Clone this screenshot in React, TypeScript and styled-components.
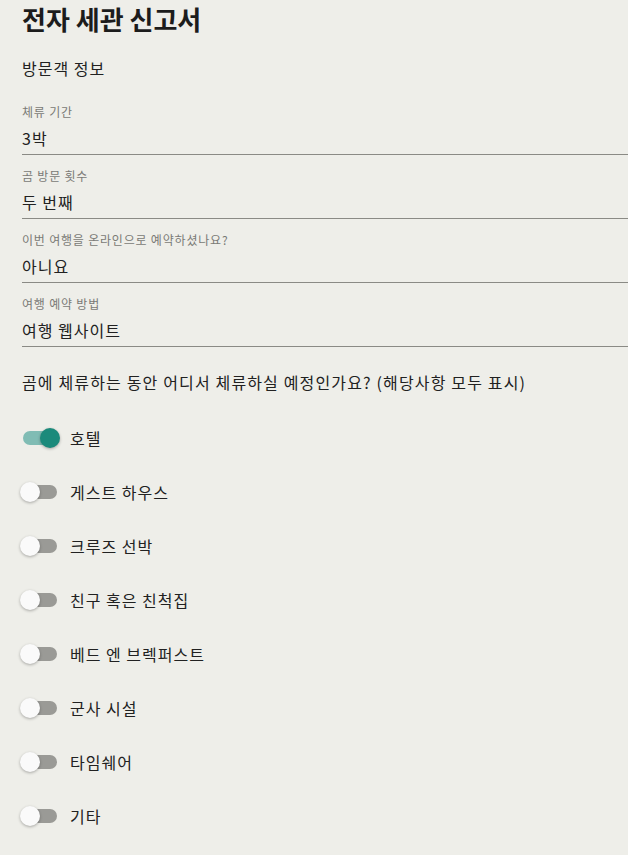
import React from "react";
import styled, { createGlobalStyle } from "styled-components";

const colors = {
  bg: "#eeeee9",
  text: "#212121",
  label: "#7a7a76",
  line: "#8a8a85",
  teal: "#1b8a7b",
  tealTrack: "#80bcb4",
  offTrack: "#9a9a96",
  thumb: "#fafafa",
};

const GlobalStyle = createGlobalStyle`
  html, body {
    margin: 0;
    padding: 0;
    background: ${colors.bg};
  }
  body {
    font-family: "Noto Sans CJK KR", "Noto Sans", sans-serif;
    color: ${colors.text};
  }
`;

const fields = [
  { label: "체류 기간", value: "3박" },
  { label: "곰 방문 횟수", value: "두 번째" },
  { label: "이번 여행을 온라인으로 예약하셨나요?", value: "아니요" },
  { label: "여행 예약 방법", value: "여행 웹사이트" },
];

const stays = [
  { name: "호텔", on: true },
  { name: "게스트 하우스", on: false },
  { name: "크루즈 선박", on: false },
  { name: "친구 혹은 친척집", on: false },
  { name: "베드 엔 브렉퍼스트", on: false },
  { name: "군사 시설", on: false },
  { name: "타임쉐어", on: false },
  { name: "기타", on: false },
];

const App: React.FC = () => {
  return (
    <>
      <GlobalStyle />
      <Page>
        <Title>전자 세관 신고서</Title>
        <SectionTitle>방문객 정보</SectionTitle>
        <FieldList>
          {fields.map((f) => (
            <Field key={f.label}>
              <FieldLabel>{f.label}</FieldLabel>
              <FieldValue>{f.value}</FieldValue>
            </Field>
          ))}
        </FieldList>
        <Question>
          곰에 체류하는 동안 어디서 체류하실 예정인가요? (해당사항 모두 표시)
        </Question>
        <ToggleList>
          {stays.map((s) => (
            <ToggleRow key={s.name}>
              <Switch>
                <Track $on={s.on} />
                <Thumb $on={s.on} />
              </Switch>
              <ToggleLabel>{s.name}</ToggleLabel>
            </ToggleRow>
          ))}
        </ToggleList>
      </Page>
    </>
  );
};

const Page = styled.div`
  padding: 4px 0 12px 22px;
  min-height: 855px;
  box-sizing: border-box;
`;

const Title = styled.h1`
  margin: 0;
  font-size: 26px;
  line-height: 30px;
  font-weight: 700;
  color: #1c1c1c;
`;

const SectionTitle = styled.h2`
  margin: 22px 0 0;
  font-size: 16px;
  line-height: 24px;
  font-weight: 400;
  letter-spacing: 1px;
`;

const FieldList = styled.div`
  margin-top: 11px;
  display: flex;
  flex-direction: column;
`;

const Field = styled.div`
  display: flex;
  flex-direction: column;
  padding: 13px 0 4px;
  border-bottom: 1px solid ${colors.line};
`;

const FieldLabel = styled.span`
  font-size: 12px;
  line-height: 16px;
  letter-spacing: 0.8px;
  color: ${colors.label};
`;

const FieldValue = styled.span`
  margin-top: 6px;
  font-size: 16px;
  line-height: 24px;
  letter-spacing: 1px;
`;

const Question = styled.p`
  margin: 23px 0 0;
  font-size: 16px;
  line-height: 24px;
  letter-spacing: 1.15px;
`;

const ToggleList = styled.div`
  margin-top: 17px;
  display: flex;
  flex-direction: column;
`;

const ToggleRow = styled.div`
  height: 54px;
  display: flex;
  align-items: center;
`;

const Switch = styled.span`
  position: relative;
  display: inline-block;
  width: 40px;
  height: 20px;
  margin-left: -2px;
  flex-shrink: 0;
`;

const Track = styled.span<{ $on: boolean }>`
  position: absolute;
  left: 3px;
  top: 3px;
  width: 34px;
  height: 14px;
  border-radius: 7px;
  background: ${(p) => (p.$on ? colors.tealTrack : colors.offTrack)};
`;

const Thumb = styled.span<{ $on: boolean }>`
  position: absolute;
  top: 0;
  left: ${(p) => (p.$on ? "20px" : "0")};
  width: 20px;
  height: 20px;
  border-radius: 50%;
  background: ${(p) => (p.$on ? colors.teal : colors.thumb)};
  box-shadow: 0 1px 3px rgba(0, 0, 0, 0.3);
`;

const ToggleLabel = styled.span`
  margin-left: 10px;
  font-size: 16px;
  line-height: 24px;
  letter-spacing: 1px;
`;

export default App;
